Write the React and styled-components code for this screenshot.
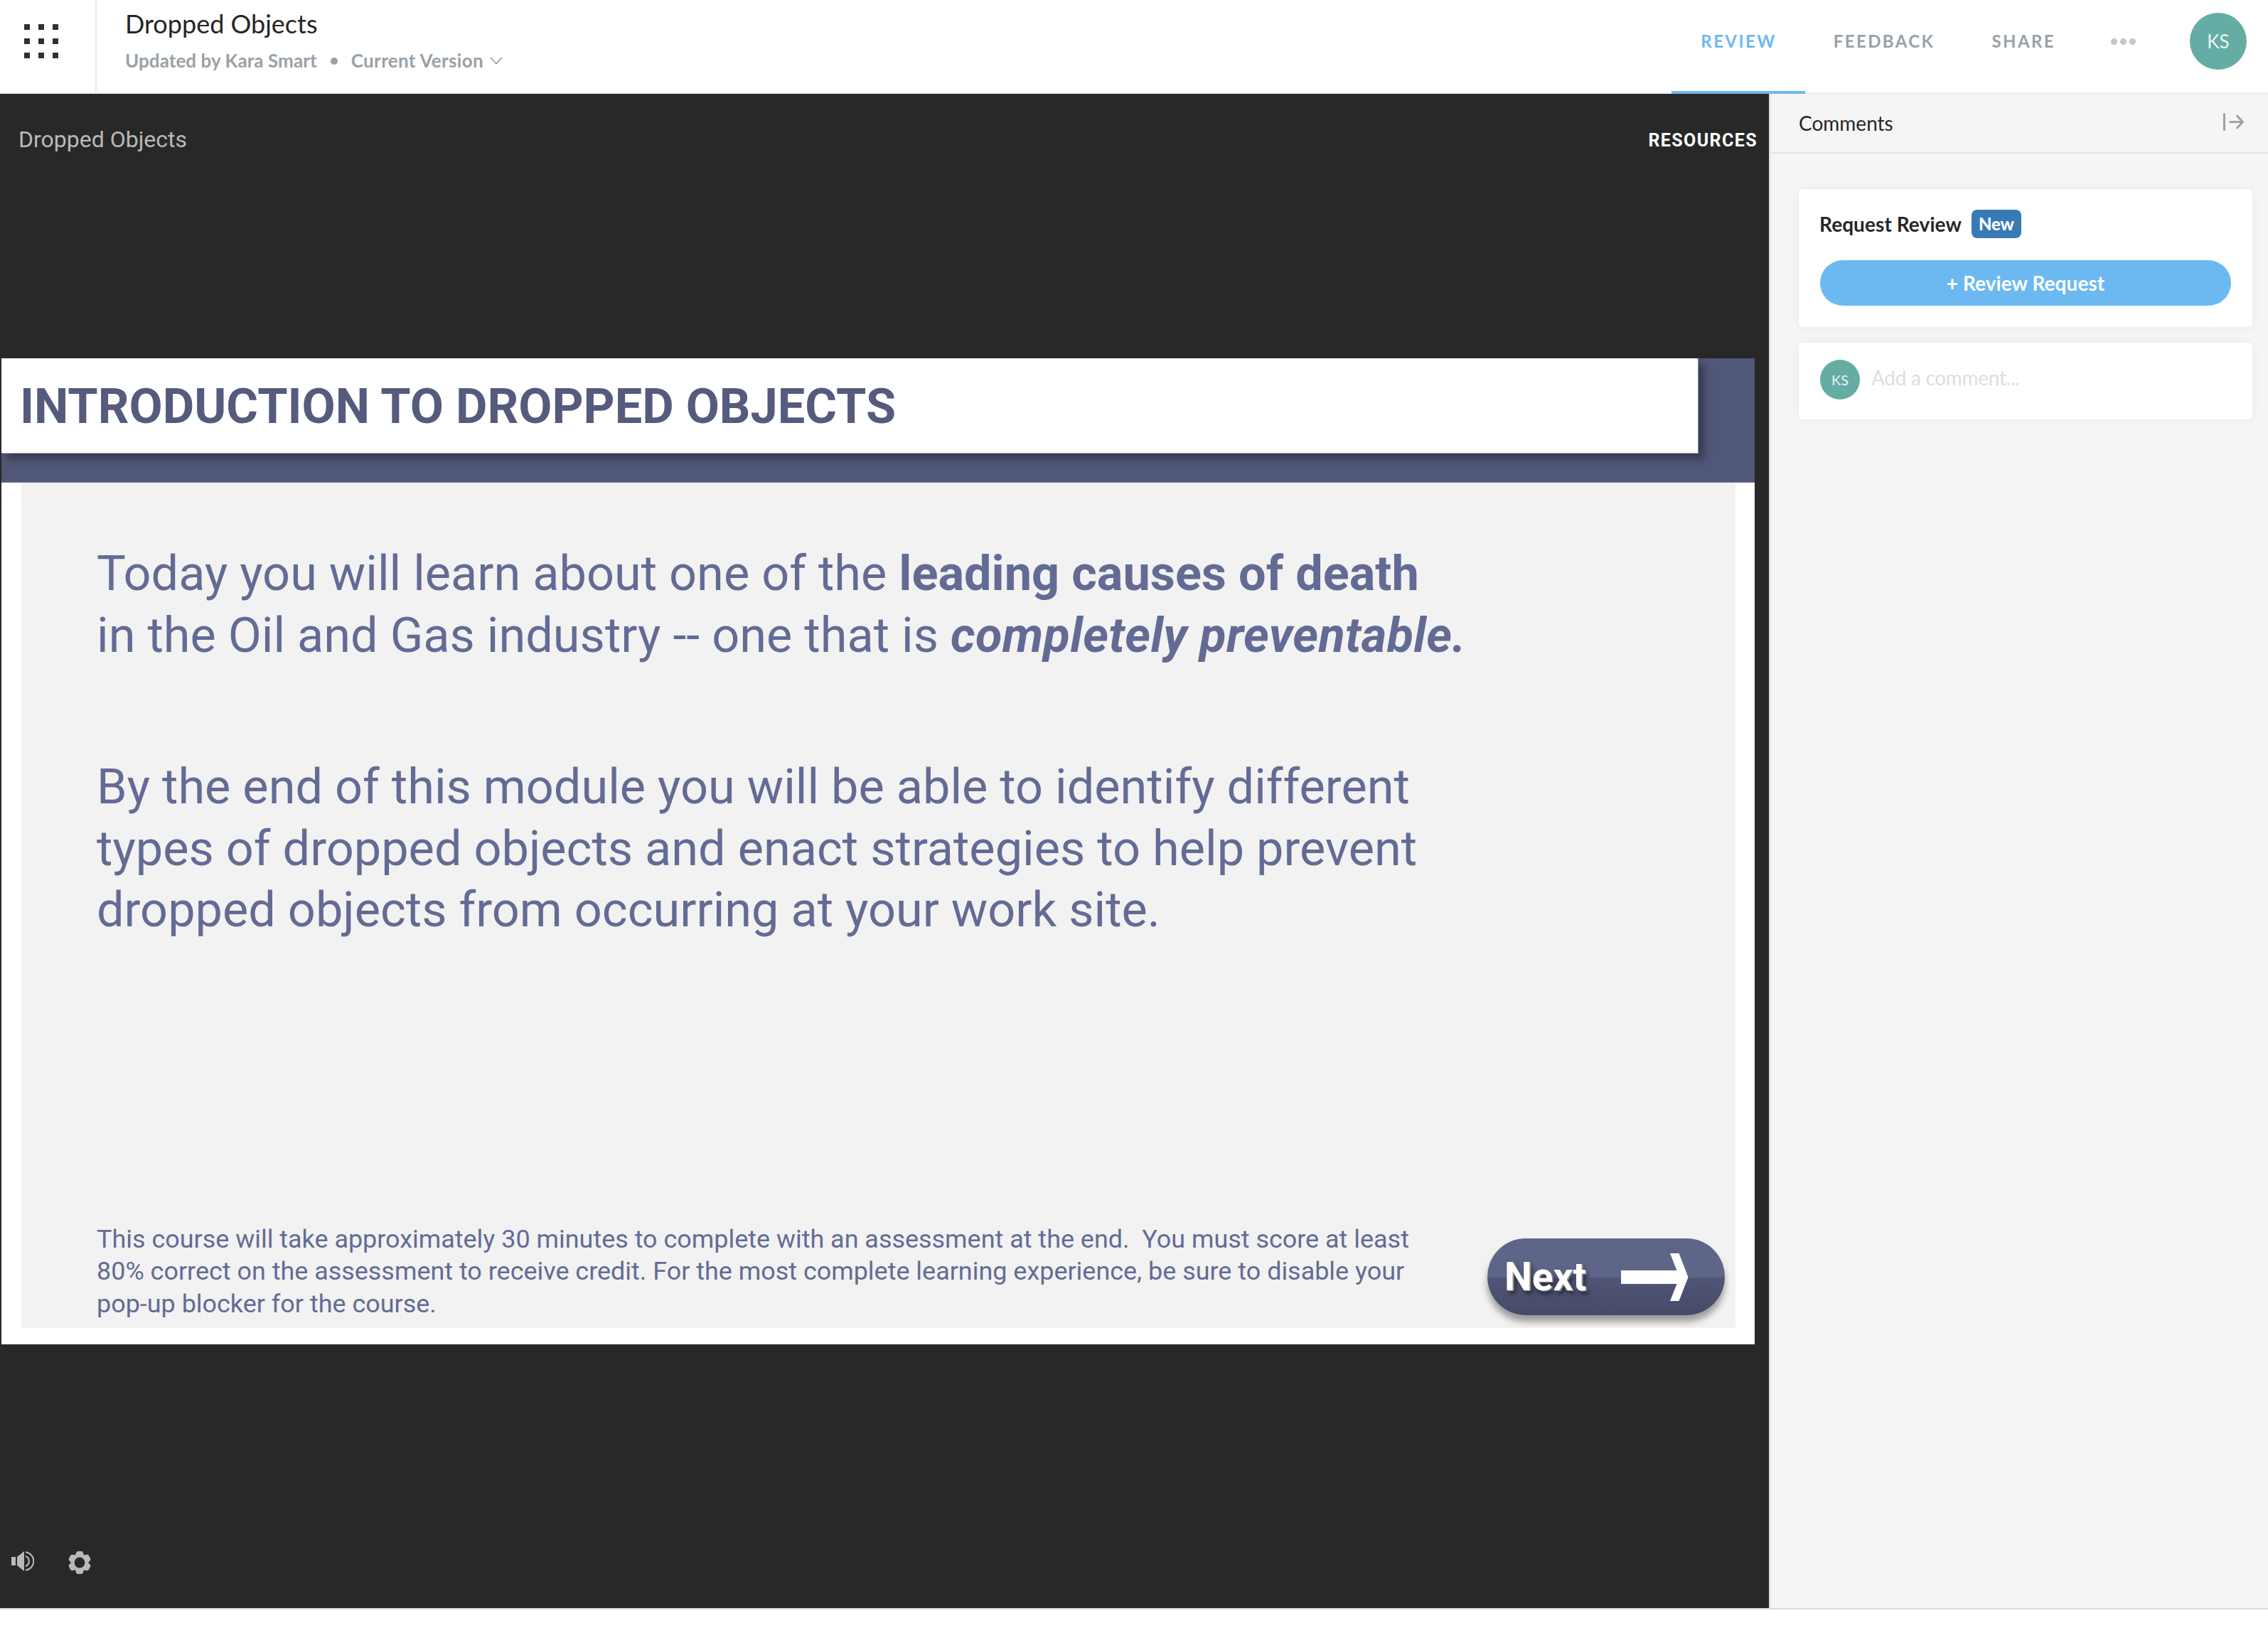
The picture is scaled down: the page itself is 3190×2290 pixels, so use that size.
import styled, { createGlobalStyle } from 'styled-components';

const GlobalStyle = createGlobalStyle`
* {
  box-sizing:border-box;
}
body {
  margin:0;
  background:#ffffff;
  font-family:Lato, "Liberation Sans", sans-serif;
}`;

const Page = styled.div`
display:flex;
flex-direction:column;
width:3190px;
height:2290px;
overflow:hidden;`;

const Header = styled.header`
display:flex;
flex-shrink:0;
height:132px;
border-bottom:2px solid #ededed;`;

const AppMenu = styled.button`
display:grid;
grid-template-columns:repeat(3, 8px);
grid-template-rows:repeat(3, 8px);
gap:12px;
width:136px;
padding:34px;
border:0;
border-right:2px solid #ededed;
background:none;`;

const MenuDot = styled.span`
background:#2d3136;`;

const TitleBlock = styled.div`
flex:1;
padding:11px 0 0 40px;`;

const CourseName = styled.div`
font-size:36px;
line-height:44px;
color:#262626;`;

const Meta = styled.div`
display:flex;
align-items:center;
margin-top:14px;
font-size:26px;
font-weight:700;
line-height:32px;
letter-spacing:0.08px;
color:#98a1a7;
white-space:nowrap;`;

const Version = styled.span`
letter-spacing:0.33px;`;

const Bullet = styled.span`
width:10px;
height:10px;
margin:2px 19px 0 19px;
border-radius:50%;
background:#98a1a7;`;

const Chevron = styled.svg`
margin-left:9px;`;

const Nav = styled.nav`
display:flex;`;

const NavItem = styled.div`
height:132px;
padding:43px 40px 0 41px;
border-bottom:4px solid ${(props) => (props.$active ? '#6cb9f1' : 'transparent')};
font-size:24px;
font-weight:700;
line-height:30px;
letter-spacing:2.4px;
color:${(props) => (props.$active ? '#6cb9f1' : '#98a1a7')};

& + & {
  padding-left:40px;
}`;

const More = styled.div`
display:flex;
gap:4px;
margin:54px 76px 0 38px;
span {
  width:9px;
  height:9px;
  border-radius:50%;
  background:#c6c6c6;
}`;

const Avatar = styled.div`
display:flex;
align-items:center;
justify-content:center;
flex-shrink:0;
width:${(props) => props.$size}px;
height:${(props) => props.$size}px;
border-radius:50%;
background:#65ada4;
color:rgba(255, 255, 255, 0.88);
font-size:${(props) => props.$font}px;`;

const HeaderUser = styled.div`
padding:18px 30px 0 0;`;

const Main = styled.main`
display:flex;
height:2132px;
flex-shrink:0;
border-bottom:2px solid #dcdcdc;`;

const Player = styled.section`
display:flex;
flex-direction:column;
width:2488px;
background:#282828;
font-family:Roboto, "Liberation Sans", sans-serif;`;

const PlayerTop = styled.div`
display:flex;
justify-content:space-between;
height:372px;
padding:44px 16px 0 26px;`;

const PlayerTitle = styled.div`
font-size:32px;
line-height:40px;
color:#b9b9b9;`;

const Resources = styled.div`
padding-top:7px;
font-size:25px;
font-weight:700;
line-height:30px;
letter-spacing:1.4px;
color:#ffffff;`;

const Slide = styled.div`
display:flex;
flex-direction:column;
width:2466px;
height:1387px;
margin-left:2px;
background:#ffffff;`;

const Band = styled.div`
height:175px;
border-bottom:1px solid #7b829c;
background:#515777;
overflow:hidden;`;

const TitleBox = styled.div`
width:2387px;
height:134px;
padding:28px 0 0 26px;
border-right:1px solid #8f93a6;
border-bottom:1px solid #a2a5b2;
background:#ffffff;
box-shadow:8px 8px 10px rgba(30, 32, 50, 0.5);
font-size:68.45px;
font-weight:700;
line-height:80px;
color:#555b7d;
white-space:nowrap;`;

const Content = styled.div`
display:flex;
flex-direction:column;
width:2411px;
height:1189px;
margin-left:28px;
padding:85px 0 0 106px;
background:#f2f2f2;
color:#636b95;`;

const Lead = styled.p`
margin:0 0 ${(props) => props.$gap || 0}px 0;
font-size:68.45px;
line-height:86.6px;
white-space:nowrap;
i {
  letter-spacing:0.35px;
}`;

const BottomRow = styled.div`
display:flex;
justify-content:space-between;
align-items:flex-end;
margin-top:auto;`;

const Note = styled.p`
margin:0 0 11px 0;
font-size:35.93px;
line-height:45.5px;
white-space:pre;`;

const NextButton = styled.button`
display:flex;
align-items:center;
width:334px;
height:108px;
margin:0 15px 18px 0;
padding:0 0 0 24px;
border:0;
border-radius:54px;
background:linear-gradient(#5e6589 0, #5e6589 51%, #505676 51%, #454a66 100%);
box-shadow:0 9px 10px rgba(0, 0, 0, 0.36);
font-family:inherit;
font-size:55px;
font-weight:700;
color:#ffffff;
text-shadow:2px 1px 1px #8a8a8a, 4px 5px 6px rgba(0, 0, 0, 0.55);`;

const Arrow = styled.svg`
margin-left:49px;`;

const Controls = styled.div`
display:flex;
align-items:flex-start;
gap:48px;
margin-top:auto;
padding:0 0 48px 16px;
svg {
  display:block;
}`;

const Sidebar = styled.aside`
flex:1;
border-left:2px solid #dcdcdc;
background:#f5f5f5;`;

const SidebarHead = styled.div`
display:flex;
justify-content:space-between;
height:84px;
padding:24px 32px 0 40px;
border-bottom:2px solid #e4e4e4;
font-size:28px;
line-height:34px;
color:#262626;
svg {
  margin-top:3px;
}`;

const Cards = styled.div`
display:flex;
flex-direction:column;
gap:22px;
padding:50px 22px 0 40px;`;

const Card = styled.div`
height:${(props) => props.$height}px;
padding:${(props) => props.$pad};
border-radius:6px;
background:#ffffff;
box-shadow:0 0 14px rgba(0, 0, 0, 0.06);`;

const RequestTitle = styled.div`
display:flex;
align-items:center;
gap:14px;
height:40px;
margin-left:-1px;
font-size:28px;
font-weight:700;
letter-spacing:0.07px;
color:#262626;`;

const Badge = styled.span`
width:70px;
height:40px;
border-radius:8px;
background:#377ab5;
color:#ffffff;
font-size:24px;
font-weight:900;
line-height:39px;
letter-spacing:-0.2px;
text-align:center;`;

const RequestButton = styled.button`
display:block;
width:578px;
height:64px;
margin-top:31px;
padding:0;
border:0;
border-radius:32px;
background:#6cb9f1;
font-family:inherit;
font-size:28px;
font-weight:700;
letter-spacing:0.07px;
color:#ffffff;`;

const CommentRow = styled.div`
display:flex;
gap:16px;`;

const Placeholder = styled.div`
padding-top:8px;
font-size:28px;
line-height:34px;
letter-spacing:-0.3px;
color:#dedede;`;

const tabs = ['REVIEW', 'FEEDBACK', 'SHARE'];

const SpeakerIcon = () => (
  <svg width="32" height="28" viewBox="0 0 32 28" fill="#b9b9b9">
    <rect x="0" y="8" width="6" height="12" />
    <path d="M8 8 L18 0 V28 L8 20 Z" />
    <path d="M20 7 A7.5 7.5 0 0 1 20 21" fill="none" stroke="#b9b9b9" strokeWidth="2.2" />
    <path d="M20 1.2 A12.9 12.9 0 0 1 20 26.8" fill="none" stroke="#b9b9b9" strokeWidth="2" />
  </svg>
);

const GearIcon = () => (
  <svg width="32" height="32" viewBox="-16 -16 32 32">
    <g fill="#b9b9b9">
      <circle r="11.5" />
      {[0, 60, 120, 180, 240, 300].map((angle) => (
        <path key={angle} transform={`rotate(${angle})`} d="M-7 -8 C-5.5 -10 -5.6 -16 -2.5 -16 H2.5 C5.6 -16 5.5 -10 7 -8 Z" />
      ))}
    </g>
    <circle r="7.4" fill="#282828" />
  </svg>
);

const App = () => {
  return (
    <Page>
      <GlobalStyle />
      <Header>
        <AppMenu>
          {Array.from({ length: 9 }, (_, i) => <MenuDot key={i} />)}
        </AppMenu>
        <TitleBlock>
          <CourseName>Dropped Objects</CourseName>
          <Meta>
            Updated by Kara Smart
            <Bullet />
            <Version>Current Version</Version>
            <Chevron width="18" height="11" viewBox="0 0 18 11" fill="none" stroke="#98a1a7" strokeWidth="1.8">
              <path d="M1 1 L9 9.5 L17 1" />
            </Chevron>
          </Meta>
        </TitleBlock>
        <Nav>
          {tabs.map((tab) => (
            <NavItem key={tab} $active={tab === 'REVIEW'}>{tab}</NavItem>
          ))}
        </Nav>
        <More><span /><span /><span /></More>
        <HeaderUser>
          <Avatar $size={80} $font={26}>KS</Avatar>
        </HeaderUser>
      </Header>
      <Main>
        <Player>
          <PlayerTop>
            <PlayerTitle>Dropped Objects</PlayerTitle>
            <Resources>RESOURCES</Resources>
          </PlayerTop>
          <Slide>
            <Band>
              <TitleBox>INTRODUCTION TO DROPPED OBJECTS</TitleBox>
            </Band>
            <Content>
              <Lead $gap={127}>
                Today you will learn about one of the <b>leading causes of death</b><br />
                in the Oil and Gas industry -- one that is <b><i>completely preventable.</i></b>
              </Lead>
              <Lead>
                By the end of this module you will be able to identify different<br />
                types of dropped objects and enact strategies to help prevent<br />
                dropped objects from occurring at your work site.
              </Lead>
              <BottomRow>
                <Note>
                  {'This course will take approximately 30 minutes to complete with an assessment at the end.  You must score at least\n'}
                  {'80% correct on the assessment to receive credit. For the most complete learning experience, be sure to disable your\n'}
                  {'pop-up blocker for the course.'}
                </Note>
                <NextButton>
                  Next
                  <Arrow width="95" height="67" viewBox="0 0 95 67" fill="#ffffff">
                    <path d="M0 24 H78.5 L69 0 H81.5 L94.5 33.5 L81.5 67 H69 L78.5 43 H0 Z" />
                  </Arrow>
                </NextButton>
              </BottomRow>
            </Content>
          </Slide>
          <Controls>
            <SpeakerIcon />
            <GearIcon />
          </Controls>
        </Player>
        <Sidebar>
          <SidebarHead>
            Comments
            <svg width="31" height="25" viewBox="0 0 31 25" fill="none" stroke="#a0a0a0" strokeWidth="3" strokeLinecap="round" strokeLinejoin="round">
              <path d="M1.5 1.5 V23.5" />
              <path d="M10 12.5 H27 M19.5 4 L27.5 12.5 L19.5 21" />
            </svg>
          </SidebarHead>
          <Cards>
            <Card $height={194} $pad="29px 30px">
              <RequestTitle>
                Request Review
                <Badge>New</Badge>
              </RequestTitle>
              <RequestButton>+ Review Request</RequestButton>
            </Card>
            <Card $height={108} $pad="24px 30px">
              <CommentRow>
                <Avatar $size={56} $font={20}>KS</Avatar>
                <Placeholder>Add a comment...</Placeholder>
              </CommentRow>
            </Card>
          </Cards>
        </Sidebar>
      </Main>
    </Page>
  );
};

export default App;
